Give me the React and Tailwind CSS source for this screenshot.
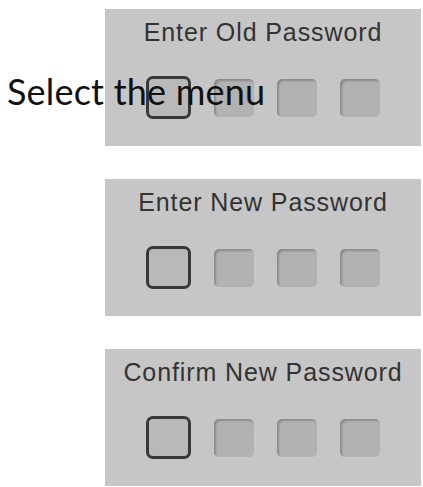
const panels = ["Enter Old Password", "Enter New Password", "Confirm New Password"];

function Slot({ active }) {
    if (active) {
        return <div className="w-[45px] h-[43px] rounded-[7px] border-[3px] border-[#383838] bg-[#b9b9b9]" />;
    }
    return (
        <div className="w-[40px] h-[38px] rounded-[5px] bg-[#b2b2b2] shadow-[inset_2px_2px_2px_rgba(0,0,0,0.22)]" />
    );
}

function PinPanel({ title }) {
    return (
        <div className="w-[316px] h-[137px] bg-[#c6c6c6] flex flex-col items-center pt-[9px]">
            <div
                className="text-[25px] leading-[28px] tracking-[0.9px] text-[#333]"
                style={{ fontFamily: '"Liberation Sans", Arial, sans-serif' }}
            >
                {title}
            </div>
            <div className="mt-[30px] flex items-center gap-[23px]">
                <Slot active />
                <Slot />
                <Slot />
                <Slot />
            </div>
        </div>
    );
}

export default function App() {
    return (
        <div className="relative w-[423px] h-[487px] bg-white overflow-hidden">
            <div className="flex flex-col gap-[33px] pl-[105px] pt-[9px]">
                {panels.map((t) => (
                    <PinPanel key={t} title={t} />
                ))}
            </div>
            <div
                className="absolute left-[7px] top-[73px] text-[36px] leading-none tracking-[0.2px] text-[#111]"
                style={{ fontFamily: "Lato, sans-serif" }}
            >
                Select the menu
            </div>
        </div>
    );
}
